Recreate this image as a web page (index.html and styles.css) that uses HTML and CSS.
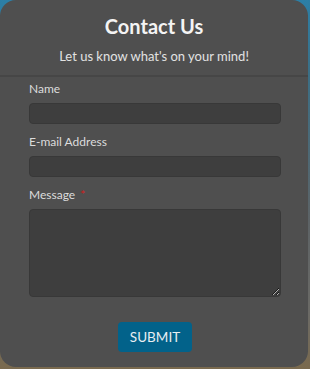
FILE: index.html
```html
<!DOCTYPE html>
<html>
<head>
  <meta charset="UTF-8">
  <title>Contact Us</title>
  <link rel="stylesheet" href="styles.css">
</head>
<body>
  <div class="contact-card">
    <div class="contact-header">
      <h1>Contact Us</h1>
      <p class="subtitle">Let us know what's on your mind!</p>
    </div>
    <form class="contact-form">
      <label class="field-label" for="name">Name</label>
      <input type="text" id="name" class="field-input">
      <label class="field-label" for="email">E-mail Address</label>
      <input type="text" id="email" class="field-input">
      <label class="field-label" for="message">Message <span class="required">*</span></label>
      <textarea id="message" class="field-textarea"></textarea>
      <div class="submit-row">
        <button type="button" class="submit-button">SUBMIT</button>
      </div>
    </form>
  </div>
</body>
</html>
```

FILE: styles.css
```css
body {
  margin: 0;
  font-family: Lato, "Open Sans", sans-serif;
  background: linear-gradient(#2c7fa6 0%, #3b6f86 20%, #5d6366 60%, #6b6a66 85%, #7a6a4e 100%);
  height: 369px;
  overflow: hidden;
}
.contact-card {
  width: 308px;
  height: 367px;
  background-color: #4f4f4f;
  border-radius: 16px;
  color: #e6e6e6;
}
.contact-header {
  text-align: center;
  padding-top: 12px;
  border-bottom: 2px solid #464646;
}
.contact-header h1 {
  margin: 0;
  font-size: 20px;
  line-height: 28px;
  font-weight: 700;
  color: #f4f4f4;
}
.subtitle {
  margin: 0;
  padding: 7px 0 10px;
  font-size: 13px;
  line-height: 18px;
  color: #e2e2e2;
}
.contact-form {
  display: flex;
  flex-direction: column;
  padding: 0 27px 0 29px;
}
.field-label {
  font-size: 12px;
  line-height: 16px;
  margin-top: 4px;
  margin-bottom: 6px;
  color: #dcdcdc;
}
.field-input,
.field-textarea {
  box-sizing: border-box;
  width: 252px;
  background-color: #3e3e3e;
  border: 1px solid #383838;
  border-radius: 4px;
  margin: 0 0 6px;
  color: #ddd;
  font-family: inherit;
}
.field-input {
  height: 21px;
}
.field-textarea {
  height: 88px;
  resize: vertical;
}
.required {
  color: #d22020;
  margin-left: 2px;
}
.submit-row {
  display: flex;
  justify-content: center;
  margin-top: 19px;
}
.submit-button {
  width: 74px;
  height: 30px;
  background-color: #02628a;
  color: #e8eef2;
  border: none;
  border-radius: 4px;
  font-family: inherit;
  font-size: 13.5px;
  cursor: pointer;
}
```
